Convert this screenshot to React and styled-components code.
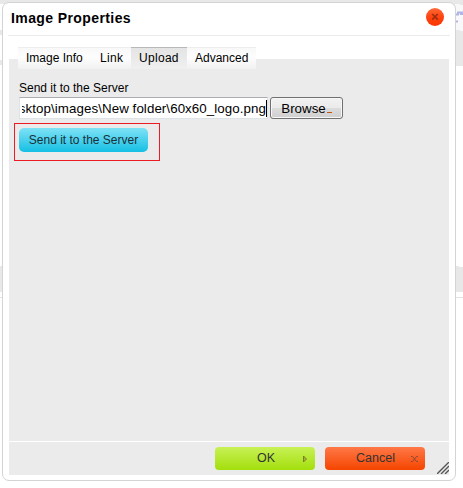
import React from 'react';
import styled, { createGlobalStyle } from 'styled-components';

const Global = createGlobalStyle`
  *{box-sizing:border-box}
  body{margin:0;background:#fff;font-family:"Liberation Sans",Arial,sans-serif;color:#000}
`;
const Page = styled.div`
  width:463px;height:488px;padding:2px 0 0 2px;position:relative;overflow:hidden;
`;
const Backdrop = styled.svg`position:absolute;left:0;top:0;`;
const Dialog = styled.section`
  position:relative;width:454px;height:479px;border:1px solid #d4d4d4;border-radius:7px;
  background:#fff;padding:0 6px 5px;display:flex;flex-direction:column;
`;
const Header = styled.header`
  height:33px;flex:none;border-bottom:1px solid #ebebeb;margin:0 -1px;display:flex;justify-content:space-between;
`;
const Title = styled.h1`
  margin:0;padding:7px 0 0 3px;font-size:14px;line-height:16px;font-weight:bold;letter-spacing:.4px;
`;
const Close = styled.button`
  width:19px;height:19px;margin:5px 5px 0 0;padding:0;border:0;background:none;
`;
const Tabs = styled.nav`
  display:flex;height:22px;margin:11px 0 -10px 9px;flex:none;position:relative;
`;
const Tab = styled.button`
  width:${p => p.$w}px;padding:2px 0 0 ${p => p.$inset}px;border:0;font:12px/17px "Liberation Sans",Arial,sans-serif;
  letter-spacing:${p => p.$track || 0}px;
  border-top:1px solid ${p => p.$active ? '#b8b8b8' : '#ededed'};
  background:${p => p.$active ? 'linear-gradient(#e4e4e4,#f0f0f0)' : 'linear-gradient(#f8f8f8,#fdfdfd 45%,#f1f1f1)'};
  white-space:nowrap;display:flex;
`;
const Panel = styled.main`
  flex:1;background:#ebebeb;padding:21px 0 0 10px;
`;
const Label = styled.label`display:block;font-size:12px;line-height:16px;`;
const FileRow = styled.div`display:flex;gap:2px;height:23px;margin-top:1px;`;
const PathField = styled.div`
  width:249px;height:22px;background:#fff;border:1px solid #dce3e9;border-top-color:#abadb3;padding-left:2px;
`;
const PathClip = styled.div`
  overflow:hidden;display:flex;justify-content:flex-end;font-size:13.33px;white-space:nowrap;height:20px;
`;
const PathText = styled.span`
  flex:none;border-right:1px solid #000;height:17px;margin-top:2px;line-height:17px;letter-spacing:.07px;
`;
const Browse = styled.button`
  width:73px;height:22px;border:1px solid #707070;border-radius:3px;padding:1px 0 0;
  background:linear-gradient(#f2f2f2,#ebebeb 48%,#dcdcdc 52%,#cfcfcf);box-shadow:inset 0 0 0 1px #f7f7f7;
  font:13.33px/19px "Liberation Sans",Arial,sans-serif;
`;
const Dots = styled.span`
  display:inline-block;width:5px;height:1px;margin-left:1px;background:#c45316;
`;
const Highlight = styled.div`
  width:146px;height:38px;border:1px solid #ed1c24;margin:3px 0 0 -5px;padding:4px;
`;
const Send = styled.button`
  width:129px;height:24px;border:0;border-radius:5px;padding:0;color:#1a3038;
  background:linear-gradient(#7fe2f6,#15bfe4);font:12px/24px "Liberation Sans",Arial,sans-serif;
`;
const Footer = styled.footer`
  height:34px;flex:none;background:#ebebeb;border-top:1px solid #fff;padding:5px 24px 0 0;
  display:flex;justify-content:flex-end;gap:10px;position:relative;
`;
const Action = styled.button`
  width:100px;height:23px;border:0;border-radius:4px;padding:0 7px 0 31px;color:#333;
  background:${p => p.$danger ? 'linear-gradient(#ff7847,#f54500)' : 'linear-gradient(#c8f156,#a3df0c)'};
  font:12.5px/22px "Liberation Sans",Arial,sans-serif;display:flex;align-items:center;justify-content:space-between;
`;
const ActionLabel = styled.span`margin:-2px 0 0 ${p => p.$indent}px;`;
const Grip = styled.svg`position:absolute;right:0;bottom:1px;`;

export default function App() {
  return (
    <Page>
      <Global />
      <Backdrop width="463" height="488">
        <path d="M0 0H463V4H0ZM0 30H3V35H0ZM0 60H3V65H0ZM0 266H3V292H0ZM448 0H463V66H448Z" fill="#e8e8e8" />
        <path d="M455 266H459V267H463V292H455Z" fill="#e8e8e8" />
        <path d="M455 4H460V5H463V31H460V30H455Z" fill="#f8f8fa" />
        <path d="M0 297.5H3M456 297.5H463" stroke="#e3e3e3" />
        <path d="M456 14.5H458V12.5H463M460 14H463M456 21.5H458" stroke="#b0b5e6" strokeWidth="2" fill="none" />
      </Backdrop>
      <Dialog>
        <Header>
          <Title>Image Properties</Title>
          <Close aria-label="Close">
            <svg width="19" height="19" viewBox="0 0 19 19">
              <defs><linearGradient id="c" x2="0" y2="1"><stop stopColor="#ff6a38" /><stop offset=".5" stopColor="#ff4310" /><stop offset="1" stopColor="#fa3500" /></linearGradient></defs>
              <circle cx="9" cy="9" r="9" fill="url(#c)" />
              <path d="M6.2 6L11.8 11.6M11.8 6L6.2 11.6" stroke="#9e2e10" strokeWidth="1.7" />
            </svg>
          </Close>
        </Header>
        <Tabs>
          <Tab $w={74} $inset={8}>Image Info</Tab>
          <Tab $w={39} $inset={8} $track={0.3}>Link</Tab>
          <Tab $w={56} $inset={8} $track={0.3} $active>Upload</Tab>
          <Tab $w={69} $inset={8}>Advanced</Tab>
        </Tabs>
        <Panel>
          <Label>Send it to the Server</Label>
          <FileRow>
            <PathField><PathClip><PathText>sktop\images\New folder\60x60_logo.png</PathText></PathClip></PathField>
            <Browse>Browse<Dots /></Browse>
          </FileRow>
          <Highlight><Send>Send it to the Server</Send></Highlight>
        </Panel>
        <Footer>
          <Action>
            <ActionLabel $indent={11}>OK</ActionLabel>
            <svg width="6" height="8" viewBox="0 0 6 8"><path d="M1.5 1V7L4.5 4Z" fill="#b4a94a" stroke="#6c7d19" strokeWidth=".9" /></svg>
          </Action>
          <Action $danger>
            <ActionLabel $indent={0}>Cancel</ActionLabel>
            <svg width="7" height="8" viewBox="0 0 7 8"><path d="M0 1.5H1.5L5.5 6.5H7M7 1.5H5.5L1.5 6.5H0" stroke="#8d4a32" fill="none" /></svg>
          </Action>
          <Grip width="12" height="12"><path d="M0 12L12 0M4 12L12 4M8 12L12 8" stroke="#555" strokeWidth="1.4" /></Grip>
        </Footer>
      </Dialog>
    </Page>
  );
}
